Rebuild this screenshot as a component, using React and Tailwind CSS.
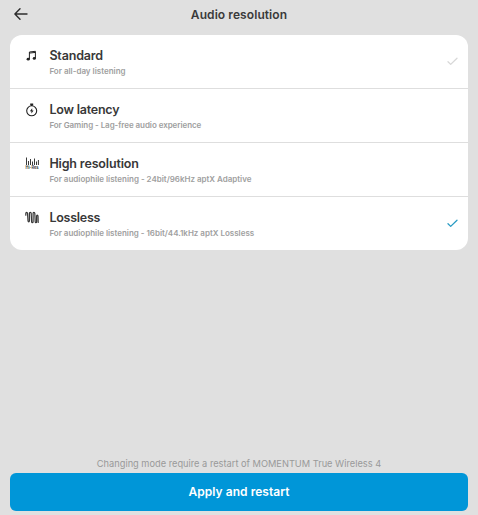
import React from 'react';

const FONT = "font-['Inter','Liberation_Sans',sans-serif]";

function BackArrow() {
  return (
    <svg width="14" height="12" viewBox="0 0 14 12" fill="none" stroke="#2c2c2c" strokeWidth="1.4" strokeLinecap="round" strokeLinejoin="round">
      <path d="M13 6H1M6 .8.9 6 6 11.2" />
    </svg>
  );
}

function NotesIcon() {
  return (
    <svg width="14" height="14" viewBox="0 0 14 14" fill="none" stroke="#222" strokeWidth="1">
      <path d="M4.4 10V3l6-.7v7M4.4 4.1l6-.7" />
      <ellipse cx="3.2" cy="10.2" rx="1.6" ry="1.4" fill="#222" stroke="none" />
      <ellipse cx="9.3" cy="9.4" rx="1.6" ry="1.4" fill="#222" stroke="none" />
    </svg>
  );
}

function TimerIcon() {
  return (
    <svg width="14" height="14" viewBox="0 0 14 14" fill="none" stroke="#222" strokeWidth="1.1">
      <circle cx="6.7" cy="7.8" r="5" />
      <path d="M5.2 1.3h3M6.7 1.3v1.6" strokeWidth="1.8" />
      <path d="M7.2 5.2 4.9 8.3h1.5v2.3l2.2-3.1H7.2z" fill="#222" stroke="none" />
    </svg>
  );
}

function HiResIcon() {
  return (
    <svg width="14" height="14" viewBox="0 0 14 14" stroke="#3a3a3a" strokeWidth="1">
      <path d="M1.5 .5v7.5M3.5 4v4M5.5 2v6M7.5 4.5v3.5M9.5 1.5v6.5M11.5 4.5v3.5M13.4 3v5" />
      <text x="0.6" y="12.4" fontSize="4.2" fontWeight="700" textLength="13" lengthAdjust="spacingAndGlyphs" fill="#444" stroke="none">Hi-Res</text>
    </svg>
  );
}

function WaveIcon() {
  return (
    <svg width="14" height="14" viewBox="0 0 14 14" fill="none" stroke="#383838" strokeWidth="1.2" strokeLinecap="round" strokeLinejoin="round">
      <path d="M.8 4.2V2.4C.8 1 2.4 1 2.5 2.4L3 9.8c.1 1.3 1.4 1.3 1.4 0V2.4c0-1.4 1.7-1.4 1.8 0l.4 8.3c.1 1.3 1.5 1.3 1.5 0V2.4c0-1.4 1.6-1.4 1.7 0l.4 8.3c.1 1.3 1.4 1.3 1.4 0V5c0-1.3 1.3-1.3 1.4 0l.2 6.4" />
    </svg>
  );
}

function Check({ className }) {
  return (
    <svg className={className} width="11" height="9" viewBox="0 0 11 9" fill="none" stroke="currentColor" strokeWidth="1.3" strokeLinecap="round" strokeLinejoin="round">
      <path d="M1 4.8 3.7 7.4 10 1.2" />
    </svg>
  );
}

const MODES = [
  { title: 'Standard', note: 'For all-day listening', Icon: NotesIcon, check: 'text-[#d8d8d8]', tracking: 'tracking-[-0.16px]', noteTracking: 'tracking-[0]' },
  { title: 'Low latency', note: 'For Gaming - Lag-free audio experience', Icon: TimerIcon, tracking: 'tracking-[-0.22px]', noteTracking: 'tracking-[-0.06px]' },
  { title: 'High resolution', note: 'For audiophile listening - 24bit/96kHz aptX Adaptive', Icon: HiResIcon, tracking: 'tracking-[-0.15px]', noteTracking: 'tracking-[-0.01px]' },
  { title: 'Lossless', note: 'For audiophile listening - 16bit/44.1kHz aptX Lossless', Icon: WaveIcon, check: 'text-[#2b9cc4]', tracking: 'tracking-[-0.25px]', noteTracking: 'tracking-[-0.015px]' },
];

export default function App() {
  return (
    <div className={`flex h-[515px] w-[478px] flex-col bg-[#e0e0e0] px-[10px] pb-[4px] ${FONT}`}>
      <header className="grid h-[35px] grid-cols-[1fr_auto_1fr] items-start">
        <button className="ml-[4px] mt-[8px] justify-self-start" aria-label="Back"><BackArrow /></button>
        <h1 className="mt-[7px] text-[12px] font-semibold leading-[16px] tracking-[0.08px] text-[#3a3a3a]">Audio resolution</h1>
      </header>
      <ul className="divide-y divide-[#dedede] overflow-hidden rounded-[12px] bg-white">
        {MODES.map(({ title, note, Icon, check, tracking, noteTracking }) => (
          <li key={title} className="flex h-[54px] items-start pl-[15px] pr-[10px] last:h-[53px]">
            <span className="mt-[14px] w-[24.4px]"><Icon /></span>
            <div className="flex-1 whitespace-nowrap pt-[12px]">
              <h2 className={`text-[12.5px] font-semibold leading-[17px] text-[#383838] ${tracking}`}>{title}</h2>
              <p className={`mt-[2px] text-[8px] font-semibold leading-[11px] text-[#a0a0a0] ${noteTracking}`}>{note}</p>
            </div>
            {check && <Check className={`mt-[22px] ${check}`} />}
          </li>
        ))}
      </ul>
      <footer className="mt-auto text-center">
        <p className="mb-[2px] text-[9.25px] leading-[14px] text-[#999]">Changing mode require a restart of MOMENTUM True Wireless 4</p>
        <button className="block h-[38px] w-full rounded-[6px] bg-[#0096d8] text-[12px] font-semibold tracking-[0.04px] text-white">Apply and restart</button>
      </footer>
    </div>
  );
}
